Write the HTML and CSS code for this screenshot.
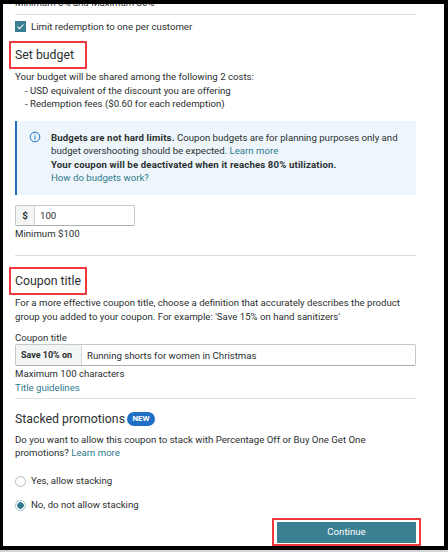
FILE: index.html
```html
<!DOCTYPE html>
<html lang="en">
<head>
    <meta charset="UTF-8">
    <meta name="viewport" content="width=device-width, initial-scale=1.0">
    <title>Coupon budget</title>
    <link rel="stylesheet" href="styles.css">
</head>
<body>
    <div class="frame">
        <div class="page">
            <p class="clipped-line">Minimum 5% and Maximum 80%</p>
            <hr class="rule rule-first">

            <label class="check-row">
                <span class="checkbox">
                    <svg viewBox="0 0 12 12" fill="none">
                        <path d="M2.8 6.2l2.2 2.2 4.2-4.6" stroke="#fff" stroke-width="1.1"/>
                    </svg>
                </span>
                Limit redemption to one per customer
            </label>

            <div class="boxed-heading heading-budget"><h2>Set budget</h2></div>
            <p>Your budget will be shared among the following 2 costs:</p>
            <ul class="cost-list">
                <li>- USD equivalent of the discount you are offering</li>
                <li>- Redemption fees ($0.60 for each redemption)</li>
            </ul>

            <div class="alert">
                <svg class="alert-icon" viewBox="0 0 12 12" fill="none">
                    <circle cx="6" cy="6" r="4.8" stroke="#1f6fc4" stroke-width="1"/>
                    <rect x="5.5" y="5.2" width="1" height="3.4" fill="#1f6fc4"/>
                    <rect x="5.5" y="3.3" width="1" height="1" fill="#1f6fc4"/>
                </svg>
                <div>
                    <p><b>Budgets are not hard limits.</b> Coupon budgets are for planning purposes only and budget overshooting should be expected. <a href="#">Learn more</a></p>
                    <p><b>Your coupon will be deactivated when it reaches 80% utilization.</b></p>
                    <p><a href="#">How do budgets work?</a></p>
                </div>
            </div>

            <div class="input-group budget-input">
                <span class="addon addon-dollar">$</span>
                <span class="value">100</span>
            </div>
            <p class="field-hint">Minimum $100</p>
            <hr class="rule rule-budget">

            <div class="boxed-heading heading-title"><h2>Coupon title</h2></div>
            <p>For a more effective coupon title, choose a definition that accurately describes the product group you added to your coupon. For example: 'Save 15% on hand sanitizers'</p>

            <p class="field-label">Coupon title</p>
            <div class="input-group title-input">
                <span class="addon addon-save">Save 10% on</span>
                <span class="value">Running shorts for women in Christmas</span>
            </div>
            <p class="field-hint">Maximum 100 characters</p>
            <p><a href="#">Title guidelines</a></p>
            <hr class="rule rule-title">

            <div class="stacked-heading">
                <h2>Stacked promotions</h2>
                <span class="badge">NEW</span>
            </div>
            <p>Do you want to allow this coupon to stack with Percentage Off or Buy One Get One promotions? <a href="#">Learn more</a></p>

            <div class="radio-list">
                <label class="radio-row"><span class="radio"></span>Yes, allow stacking</label>
                <label class="radio-row"><span class="radio radio-on"></span>No, do not allow stacking</label>
            </div>

            <div class="actions">
                <div class="continue-box">
                    <button class="continue-btn">Continue</button>
                </div>
            </div>
        </div>
    </div>
</body>
</html>
```

FILE: styles.css
```css
* {
    margin: 0;
    padding: 0;
    box-sizing: border-box;
}

html, body {
    height: 552px;
    overflow: hidden;
}

body {
    font-family: Roboto, "Liberation Sans", sans-serif;
    font-size: 9.65px;
    line-height: 13.3px;
    color: #2a3030;
    background: #d4d4d4;
}

.frame {
    height: 550px;
    background: #fff;
    border-style: solid;
    border-color: #000;
    border-width: 4px 4px 4px 3px;
    overflow: hidden;
}

.page {
    padding: 0 28px 0 12px;
    margin-top: -8px;
}

a {
    color: #2f7a8c;
    text-decoration: none;
}

b {
    letter-spacing: 0.14px;
}

h2 {
    font-size: 12.3px;
    line-height: 18px;
    font-weight: 400;
    white-space: nowrap;
}

.clipped-line {
    height: 13px;
}

.rule {
    border: none;
    height: 1px;
    background: #dcdfdf;
}

.rule-first {
    margin-top: 5px;
}

.rule-budget {
    margin-top: 15px;
}

.rule-title {
    margin-top: 4px;
}

.check-row {
    display: flex;
    align-items: center;
    gap: 5px;
    margin-top: 5px;
}

.checkbox {
    width: 11px;
    height: 11px;
    background: #3a7f92;
    display: flex;
}

.boxed-heading {
    border: 2px solid #f03a3a;
    padding: 3px 4px 0;
    width: 78px;
    height: 28px;
    margin-left: -6px;
}

.heading-budget {
    margin-top: 8px;
}

.heading-title {
    margin-top: 11px;
}

.heading-budget + p,
.heading-title + p {
    margin-top: 1px;
}

.cost-list {
    list-style: none;
    padding-left: 10px;
}

.alert {
    display: flex;
    gap: 10px;
    height: 74px;
    margin-top: 11px;
    padding: 10px 18px 0 12px;
    background: #eef6fb;
    border-left: 2px solid #1f6fc4;
}

.alert-icon {
    width: 12px;
    height: 12px;
    flex-shrink: 0;
}

.input-group {
    display: flex;
    border: 1px solid #c4c8c8;
    border-bottom-color: #a9aeae;
    border-radius: 2px;
    align-items: stretch;
    background: #fff;
}

.budget-input {
    width: 120px;
    height: 21px;
    margin-top: 10px;
}

.field-hint {
    margin-top: 1px;
}

.title-input {
    height: 22px;
}

.addon {
    display: flex;
    align-items: center;
    justify-content: center;
    font-weight: 700;
    background: #f4f5f5;
    border-right: 1px solid #d5d9d9;
}

.addon-dollar {
    width: 19px;
}

.addon-save {
    width: 66px;
    font-size: 9px;
    padding-right: 4px;
}

.value {
    display: flex;
    align-items: center;
    padding-left: 5px;
}

.field-label {
    margin-top: 9px;
    line-height: 12.3px;
}

.stacked-heading {
    display: flex;
    align-items: center;
    gap: 2px;
    margin: 11px 0 5px;
}

.badge {
    width: 28px;
    height: 14px;
    border-radius: 7px;
    background: #1f6fc4;
    color: #fff;
    font-size: 8px;
    font-weight: 700;
    line-height: 14px;
    text-align: center;
}

.radio-list {
    margin-top: 15px;
    display: flex;
    flex-direction: column;
    gap: 11px;
}

.radio-row {
    display: flex;
    align-items: center;
    gap: 5px;
    height: 13px;
}

.radio {
    width: 11px;
    height: 11px;
    border: 1px solid #b5baba;
    border-radius: 50%;
    background: #fff;
}

.radio-on {
    border-color: #9fc3cd;
    background: radial-gradient(circle, #2f7a8c 0 3px, #fff 3.5px);
}

.actions {
    display: flex;
    justify-content: flex-end;
    margin: 6px -5px 0 0;
}

.continue-box {
    width: 149px;
    height: 28px;
    border: 2px solid #f03a3a;
    padding: 2px 3px 1px;
}

.continue-btn {
    display: block;
    width: 100%;
    height: 100%;
    border: none;
    background: #3a7f92;
    color: #fff;
    font: inherit;
}
```
